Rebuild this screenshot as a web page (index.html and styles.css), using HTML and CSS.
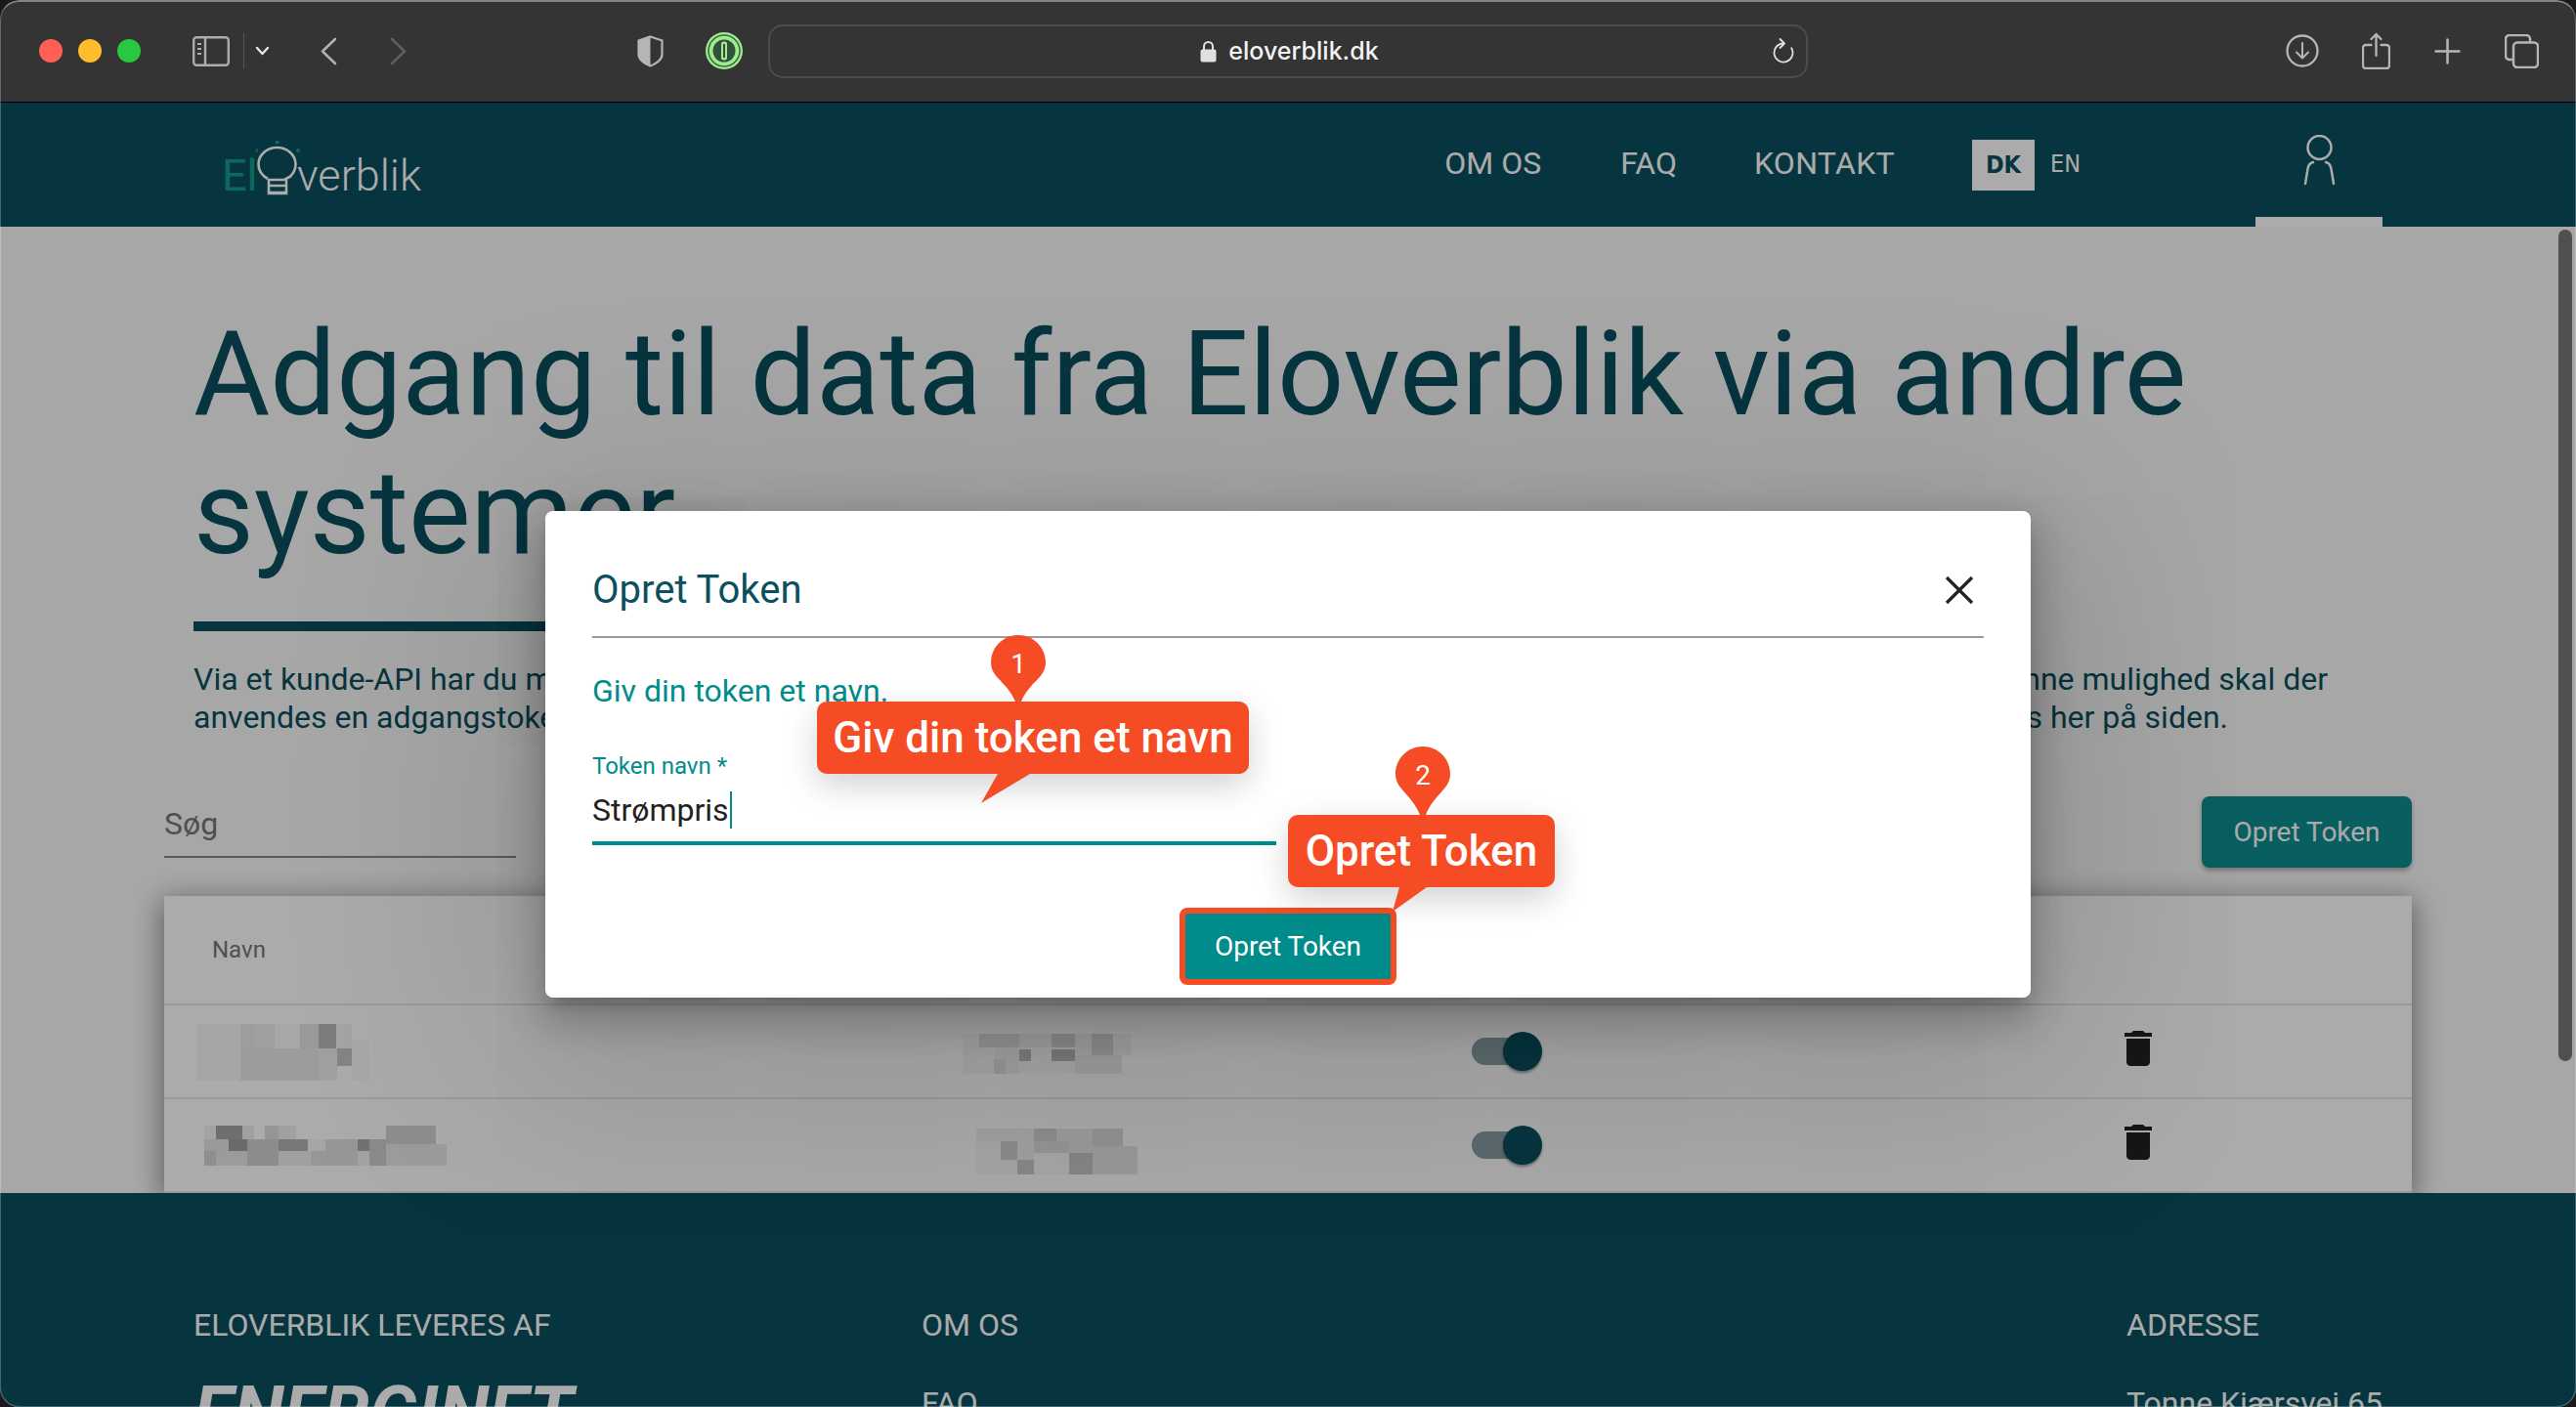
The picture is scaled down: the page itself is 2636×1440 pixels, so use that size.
FILE: index.html
```html
<!DOCTYPE html>
<html lang="da">
<head>
<meta charset="utf-8">
<title>Eloverblik</title>
<link rel="stylesheet" href="styles.css">
</head>
<body>
<div class="window">
  <div class="toolbar">
    <span class="light red"></span><span class="light yellow"></span><span class="light green"></span>
    <svg class="ic-sidebar" width="38" height="31" viewBox="0 0 38 31" fill="none" stroke="#adadad" stroke-width="2.4"><rect x="1.2" y="1.2" width="35.6" height="28.6" rx="3"/><path d="M13 1.2V29.8"/><path d="M5 8h4M5 13h4M5 18h4" stroke-width="2"/></svg>
    <span class="tb-divider"></span>
    <svg class="ic-chev" width="15" height="10" viewBox="0 0 15 10" fill="none" stroke="#e6e6e6" stroke-width="2.4" stroke-linecap="round" stroke-linejoin="round"><path d="M2 2l5.500 6L13 2"/></svg>
    <svg class="ic-back" width="17" height="29" viewBox="0 0 17 29" fill="none" stroke="#b0b0b0" stroke-width="2.600" stroke-linecap="round" stroke-linejoin="round"><path d="M15 2L2 14.500 15 27"/></svg>
    <svg class="ic-fwd" width="17" height="29" viewBox="0 0 17 29" fill="none" stroke="#5f5f5f" stroke-width="2.600" stroke-linecap="round" stroke-linejoin="round"><path d="M2 2l13 12.500L2 27"/></svg>
    <svg class="ic-shield" width="27" height="33" viewBox="0 0 27 33"><path d="M13.500 1.500L25.500 5.500V20C25.500 25 19 29.500 13.500 31.500 8 29.500 1.500 25 1.500 20V5.500Z" fill="none" stroke="#b5b5b5" stroke-width="2.200"/><path d="M13.500 1.500L1.500 5.500V20C1.500 25 8 29.500 13.500 31.500Z" fill="#b5b5b5"/></svg>
    <svg class="ic-onepass" width="38" height="38" viewBox="0 0 38 38"><circle cx="19" cy="19" r="19" fill="#a2ea90"/><circle cx="19" cy="19" r="16" fill="none" stroke="#2f6b35" stroke-width="1.500"/><circle cx="19" cy="19" r="11.500" fill="#33503a"/><rect x="16" y="9.500" width="6" height="19" rx="2.500" fill="#a2ea90"/><rect x="18" y="12" width="2" height="14" fill="#33503a"/></svg>
    <div class="urlbar">
      <span></span>
      <span class="url">
        <svg width="17" height="23" viewBox="0 0 17 23"><path d="M4 10V6.500a4.500 4.500 0 0 1 9 0V10" fill="none" stroke="#e0e0e0" stroke-width="2"/><rect x="0.500" y="9.500" width="16" height="13" rx="2" fill="#e0e0e0"/></svg>
        <span class="url-text">eloverblik.dk</span>
      </span>
      <svg class="ic-reload" width="22" height="26" viewBox="0 0 22 26" fill="none" stroke="#e0e0e0" stroke-width="1.800" stroke-linecap="round" stroke-linejoin="round"><path d="M11 5.500A9.500 9.500 0 1 0 19.200 10.200"/><path d="M7.500 1L12 5.500 7.500 10"/></svg>
    </div>
    <svg class="ic-download" width="34" height="34" viewBox="0 0 34 34" fill="none" stroke="#b5b5b5" stroke-width="2.300" stroke-linecap="round" stroke-linejoin="round"><circle cx="17" cy="17" r="15.500"/><path d="M17 9v15M11 18.500l6 6 6-6" stroke-width="2"/></svg>
    <svg class="ic-share" width="29" height="38" viewBox="0 0 29 38" fill="none" stroke="#b5b5b5" stroke-width="2.300" stroke-linecap="round" stroke-linejoin="round"><path d="M9.500 13H4a3 3 0 0 0-3 3v18a3 3 0 0 0 3 3h21a3 3 0 0 0 3-3V16a3 3 0 0 0-3-3h-5.500"/><path d="M14.500 24V2M9.500 7l5-5 5 5"/></svg>
    <svg class="ic-plus" width="27" height="27" viewBox="0 0 27 27" fill="none" stroke="#b5b5b5" stroke-width="2.500" stroke-linecap="round"><path d="M13.500 1.500v24M1.500 13.500h24"/></svg>
    <svg class="ic-tabs" width="35" height="35" viewBox="0 0 35 35" fill="none" stroke="#b5b5b5" stroke-width="2.500"><path d="M8 26H5a4 4 0 0 1-4-4V5a4 4 0 0 1 4-4h17a4 4 0 0 1 4 4v3"/><rect x="9" y="8.500" width="25" height="25.500" rx="4"/></svg>
  </div>

  <div class="page">
    <header class="site-header">
      <div class="logo">
        <span class="logo-el">El</span>
        <svg class="logo-bulb" width="55" height="58" viewBox="0 0 55 58" fill="none" stroke="#ffffff" stroke-width="2.600"><path d="M12 40C5 36 2.500 31 2.500 25a19 17 0 0 1 38 0c0 5-2 9-5 12"/><path d="M12 41h17l7-4M13 41v14h18V41M13 47h18M13 54h18"/><g fill="#179c8a" stroke="none"><circle cx="21.700" cy="2.500" r="2"/><circle cx="0" cy="11" r="2"/><circle cx="43" cy="11" r="2"/></g></svg>
        <span class="logo-rest">verblik</span>
      </div>
      <nav class="nav">
        <a class="nav-link">OM OS</a>
        <a class="nav-link nav-faq">FAQ</a>
        <a class="nav-link nav-kontakt">KONTAKT</a>
        <div class="lang"><span class="lang-on">DK</span><span class="lang-off">EN</span></div>
        <div class="user">
          <svg width="33" height="52" viewBox="0 0 33 52" fill="none" stroke="#fff" stroke-width="2.500" stroke-linecap="round"><circle cx="16.500" cy="13" r="12"/><path d="M10 28C6 29 5 31 4.500 35L2 50M23 28c4 1 5 3 5.500 7L31 50"/></svg>
        </div>
      </nav>
    </header>

    <main class="main">
      <h1 class="title">Adgang til data fra Eloverblik via andre systemer</h1>
      <div class="rule"></div>
      <div class="intro">
        <p class="intro-line first"><span>Via et kunde-API har du mulighed for at hente dine data</span><span>For at benytte denne mulighed skal der</span></p>
        <p class="intro-line second"><span>anvendes en adgangstoken</span><span>Det gøres her på siden.</span></p>
      </div>
      <div class="tools">
        <div class="search">Søg</div>
        <button class="btn-main">Opret Token</button>
      </div>
      <section class="card">
        <div class="row head"><span class="cell-name">Navn</span></div>
        <div class="row">
          <svg class="blob b1" width="176" height="58" viewBox="0 0 176 58">
            <rect width="45" height="58" fill="#f8f8f8"/><rect x="45" width="15" height="28" fill="#eaeaea"/><rect x="60" width="20" height="25" fill="#efefef"/><rect x="80" width="26" height="25" fill="#fafafa"/><rect x="106" width="19" height="25" fill="#e6e6e6"/><rect x="125" width="18" height="25" fill="#bdbdbd"/><rect x="143" width="16" height="25" fill="#f5f5f5"/><rect x="45" y="25" width="80" height="33" fill="#e9e9e9"/><rect x="125" y="25" width="19" height="33" fill="#efefef"/><rect x="144" y="25" width="15" height="18" fill="#c5c5c5"/><rect x="144" y="43" width="15" height="15" fill="#ffffff"/><rect x="159" y="16" width="17" height="42" fill="#fafafa"/>
          </svg>
          <svg class="blob b3" width="173" height="41" viewBox="0 0 173 41">
            <rect width="32" height="41" fill="#f6f6f6"/><rect x="17" width="41" height="14" fill="#dedede"/><rect x="58" width="33" height="14" fill="#efefef"/><rect x="91" width="24" height="14" fill="#d1d1d1"/><rect x="115" width="17" height="22" fill="#f0f0f0"/><rect x="132" width="22" height="22" fill="#d5d5d5"/><rect x="154" width="19" height="22" fill="#f4f4f4"/><rect x="32" y="14" width="26" height="12" fill="#f0f0f0"/><rect x="32" y="26" width="12" height="15" fill="#e0e0e0"/><rect x="44" y="26" width="14" height="15" fill="#f0f0f0"/><rect x="58" y="14" width="33" height="14" fill="#f8f8f8"/><rect x="58" y="16" width="12" height="12" fill="#bababa"/><rect x="91" y="14" width="24" height="14" fill="#f8f8f8"/><rect x="91" y="16" width="24" height="12" fill="#b8b8b8"/><rect x="115" y="22" width="48" height="19" fill="#ececec"/><rect x="58" y="28" width="57" height="13" fill="#f8f8f8"/>
          </svg>
          <span class="toggle"><span class="knob"></span></span>
          <svg class="trash" width="48" height="48" viewBox="0 0 24 24"><path d="M6 19c0 1.100.9 2 2 2h8c1.100 0 2-.9 2-2V7H6v12zM19 4h-3.500l-1-1h-5l-1 1H5v2h14V4z"/></svg>
        </div>
        <div class="row">
          <svg class="blob b2" width="248" height="41" viewBox="0 0 248 41">
            <rect width="12" height="14" fill="#f2f2f2"/><rect x="12" width="27" height="14" fill="#a6a6a6"/><rect x="39" width="12" height="14" fill="#efefef"/><rect x="62" width="14" height="14" fill="#dedede"/><rect x="76" width="18" height="14" fill="#efefef"/><rect x="186" width="51" height="19" fill="#d4d4d4"/><rect y="14" width="25" height="12" fill="#e4e4e4"/><rect x="25" y="14" width="19" height="12" fill="#9e9e9e"/><rect x="44" y="14" width="32" height="27" fill="#d1d1d1"/><rect x="76" y="14" width="30" height="12" fill="#b3b3b3"/><rect x="106" y="14" width="18" height="12" fill="#f6f6f6"/><rect x="124" y="14" width="33" height="27" fill="#e0e0e0"/><rect x="157" y="14" width="12" height="12" fill="#aaaaaa"/><rect x="169" y="14" width="17" height="27" fill="#cecece"/><rect x="186" y="19" width="62" height="22" fill="#e9e9e9"/><rect y="26" width="12" height="15" fill="#d5d5d5"/><rect x="12" y="26" width="32" height="15" fill="#e7e7e7"/><rect x="76" y="26" width="33" height="15" fill="#efefef"/><rect x="109" y="26" width="15" height="15" fill="#e1e1e1"/><rect x="157" y="26" width="12" height="15" fill="#f3f3f3"/>
          </svg>
          <svg class="blob b4" width="165" height="47" viewBox="0 0 165 47">
            <rect width="59" height="13" fill="#f0f0f0"/><rect x="59" width="23" height="13" fill="#d4d4d4"/><rect x="82" width="37" height="13" fill="#e9e9e9"/><rect x="119" width="31" height="18" fill="#dbdbdb"/><rect y="13" width="25" height="34" fill="#f8f8f8"/><rect x="25" y="13" width="17" height="19" fill="#d1d1d1"/><rect x="42" y="13" width="17" height="19" fill="#f0f0f0"/><rect x="59" y="13" width="36" height="12" fill="#e0e0e0"/><rect x="95" y="13" width="24" height="12" fill="#e7e7e7"/><rect x="119" y="18" width="46" height="29" fill="#e6e6e6"/><rect x="25" y="32" width="17" height="15" fill="#f8f8f8"/><rect x="42" y="32" width="17" height="15" fill="#cbcbcb"/><rect x="59" y="25" width="36" height="22" fill="#fafafa"/><rect x="95" y="25" width="24" height="22" fill="#c8c8c8"/>
          </svg>
          <span class="toggle"><span class="knob"></span></span>
          <svg class="trash" width="48" height="48" viewBox="0 0 24 24"><path d="M6 19c0 1.100.9 2 2 2h8c1.100 0 2-.9 2-2V7H6v12zM19 4h-3.500l-1-1h-5l-1 1H5v2h14V4z"/></svg>
        </div>
      </section>
    </main>

    <footer class="footer">
      <div>
        <h4 class="foot-head">ELOVERBLIK LEVERES AF</h4>
        <div class="brand">ENERGINET</div>
      </div>
      <div>
        <h4 class="foot-head">OM OS</h4>
        <div class="foot-item">FAQ</div>
      </div>
      <div>
        <h4 class="foot-head">ADRESSE</h4>
        <div class="foot-item">Tonne Kjærsvej 65</div>
      </div>
    </footer>
    <div class="overlay"></div>
    <div class="scrollthumb"></div>
  </div>

  <div class="modal">
    <div class="modal-head">
      <h2 class="modal-title">Opret Token</h2>
      <svg class="modal-close" width="30" height="30" viewBox="0 0 30 30" fill="none" stroke="#222" stroke-width="3.200"><path d="M2 2l26 26M28 2L2 28"/></svg>
    </div>
    <p class="modal-sub">Giv din token et navn.</p>
    <label class="field-label">Token navn *</label>
    <div class="field-value">Strømpris<span class="caret"></span></div>
    <div class="modal-actions"><button class="btn-modal">Opret Token</button></div>
  </div>

  <div class="callout c1">
    <svg class="pin" width="56" height="68" viewBox="0 0 56 68"><path d="M28 0C43.500 0 56 12.500 56 28 56 44 40 47 31 68H25C16 47 0 44 0 28 0 12.500 12.500 0 28 0Z"/></svg>
    <span class="pin-num">1</span>
    <svg class="tail" width="60" height="30" viewBox="0 0 60 30"><path d="M25 0H58L8 30Z"/></svg>
    Giv din token et navn
  </div>
  <div class="callout c2">
    <svg class="pin" width="56" height="70" viewBox="0 0 56 70"><path d="M28 0C43.500 0 56 12.500 56 28 56 44 40 48 31 70H25C16 48 0 44 0 28 0 12.500 12.500 0 28 0Z"/></svg>
    <span class="pin-num">2</span>
    <svg class="tail" width="45" height="25" viewBox="0 0 45 25"><path d="M14 0H42L7 25Z"/></svg>
    Opret Token
  </div>
</div>
</body>
</html>
```

FILE: styles.css
```css
* { box-sizing: border-box; }
html, body { margin: 0; padding: 0; height: 100%; background: #1a1a1a; overflow: hidden; }
body { font-family: Roboto, "Liberation Sans", sans-serif; }
.window { position: relative; width: 2636px; height: 1440px; border-radius: 20px; overflow: hidden; display: flex; flex-direction: column; }
.window::after { content: ""; position: absolute; inset: 0; border-radius: 20px; border: 1px solid rgba(255,255,255,.25); border-top: 2px solid rgba(255,255,255,.4); pointer-events: none; }

/* Browser toolbar */
.toolbar { flex: 0 0 105px; height: 105px; background: #343434; border-bottom: 1px solid #000; display: flex; align-items: center; padding-left: 40px; }
.light { width: 24px; height: 24px; border-radius: 50%; margin-right: 16px; }
.red { background: #ff5f57; }
.yellow { background: #febc2e; }
.green { background: #28c840; }
.ic-sidebar { margin-left: 37px; }
.tb-divider { width: 1px; height: 36px; background: #555; margin-left: 14px; }
.ic-chev { margin-left: 11px; }
.ic-back { margin-left: 52px; }
.ic-fwd { margin-left: 54px; }
.ic-shield { margin-left: 236px; }
.ic-onepass { margin-left: 43px; }
.urlbar { width: 1064px; height: 55px; margin-left: 26px; border: 2px solid #4c4c4c; border-radius: 15px; display: grid; grid-template-columns: 1fr auto 1fr; align-items: center; padding: 0 12px 0 15px; }
.url { display: flex; align-items: center; gap: 12px; }
.url-text { font-family: Inter, sans-serif; font-size: 25px; color: #f2f2f2; font-weight: 500; }
.ic-reload { justify-self: end; }
.ic-download { margin-left: 489px; }
.ic-share { margin-left: 44px; }
.ic-plus { margin-left: 45px; }
.ic-tabs { margin-left: 45px; }

/* Page */
.page { position: relative; flex: 1; overflow: hidden; background: #fafafa; }
.site-header { height: 127px; background: #0a505e; display: flex; align-items: stretch; padding: 0 198px 0 227px; justify-content: space-between; }
.logo { display: flex; align-items: flex-end; padding-bottom: 31px; font-size: 45px; font-weight: 300; line-height: 42px; }
.logo-el { color: #179c8a; font-weight: 400; width: 35px; }
.logo-bulb { margin-right: -13px; }
.logo-rest { color: #fff; }
.nav { display: flex; align-items: center; font-size: 32px; color: #fff; }
.nav-link { margin-right: 81px; line-height: 38px; padding-bottom: 4px; }
.nav-faq { margin-right: 79px; }
.nav-kontakt { letter-spacing: .3px; margin-right: 79px; }
.lang { display: flex; align-items: center; font-family: "DejaVu Sans Condensed", "DejaVu Sans", sans-serif; font-size: 25px; margin-right: 179px; }
.lang-on { width: 64px; height: 52px; background: #fff; color: #0a505e; font-weight: 700; display: flex; align-items: center; justify-content: center; margin-right: 16px; padding-bottom: 1px; }
.lang-off { color: #fff; padding-bottom: 2px; }
.user { width: 130px; height: 127px; border-bottom: 10px solid #fff; display: flex; justify-content: center; padding-top: 33px; }

.main { padding: 80px 168px 0; height: 989px; }
.title { margin: 0 0 40px 30px; font-size: 120px; line-height: 142px; font-weight: 400; color: #0a505e; width: 2100px; }
.rule { width: 600px; height: 10px; margin-left: 30px; background: #0a505e; }
.intro { margin: 30px 0 61px 30px; color: #0a505e; font-size: 32px; line-height: 39px; }
.intro-line { margin: 0; display: flex; justify-content: space-between; white-space: nowrap; }
.intro-line.first { padding-right: 86px; }
.intro-line.second { padding-right: 188px; }
.tools { height: 73px; margin-bottom: 29px; display: flex; justify-content: space-between; }
.search { width: 360px; height: 63px; border-bottom: 2px solid #8a8a8a; font-size: 32px; color: #777; line-height: 38px; padding-top: 9px; }
.btn-main { width: 215px; height: 73px; border: 0; border-radius: 8px; background: #0e8e8f; color: #fff; font: 400 28px Roboto, sans-serif; box-shadow: 0 3px 5px rgba(0,0,0,.3); }
.card { background: #fff; box-shadow: 0 6px 28px 2px rgba(0,0,0,.45); }
.row { height: 96px; display: grid; grid-template-columns: 817px 521px 658px 1fr; align-items: center; border-bottom: 2px solid #e6e6e6; }
.row.head { height: 112px; display: flex; }
.cell-name { margin-left: 49px; font-size: 24px; color: #777; }
.blob { display: block; }
.b1 { margin: 2px 0 0 33px; }
.b2 { margin-left: 41px; }
.b3 { margin-top: 5px; }
.b4 { margin: 13px 0 0 14px; }
.toggle { position: relative; display: block; width: 60px; height: 28px; border-radius: 14px; background: #8aa0a6; }
.knob { position: absolute; right: -12px; top: -6px; width: 40px; height: 40px; border-radius: 50%; background: #0a505e; box-shadow: 0 2px 3px rgba(0,0,0,.4); }
.trash { display: block; margin-top: -6px; fill: #212121; }

.footer { height: 300px; background: #0a505e; color: #fff; display: grid; grid-template-columns: 745px 1233px 1fr; padding: 116px 0 0 198px; font-size: 32px; line-height: 38px; }
.foot-head { margin: 0; font-size: 32px; font-weight: 400; line-height: 38px; }
.foot-item { margin-top: 42px; }
.brand { margin-top: 35px; font-size: 75px; line-height: 72px; font-weight: 700; font-style: italic; }

.overlay { position: absolute; inset: 0; background: rgba(0,0,0,.33); }
.scrollthumb { position: absolute; right: 4px; top: 130px; width: 14px; height: 851px; border-radius: 7px; background: #505050; }

/* Dialog */
.modal { position: absolute; left: 558px; top: 523px; width: 1520px; height: 498px; background: #fff; border-radius: 8px; padding: 0 48px; box-shadow: 0 11px 15px -7px rgba(0,0,0,.2), 0 24px 38px 3px rgba(0,0,0,.14), 0 9px 46px 8px rgba(0,0,0,.12), 0 40px 220px 50px rgba(0,0,0,.16); }
.modal-head { height: 130px; border-bottom: 2px solid #9a9a9a; display: flex; align-items: center; justify-content: space-between; padding: 0 10px 0 0; }
.modal-title { margin: 0; font-size: 40px; font-weight: 400; color: #0a505e; line-height: 46px; padding-top: 34px; }
.modal-close { margin-top: 34px; }
.modal-sub { margin: 35px 0 0; font-size: 32px; line-height: 38px; color: #008c8a; }
.field-label { display: block; margin-top: 44px; font-size: 24px; line-height: 28px; color: #008c8a; }
.field-value { margin-top: 12px; height: 55px; border-bottom: 4px solid #008c8a; width: 700px; font-size: 32px; line-height: 38px; color: #222; display: flex; }
.caret { width: 2px; height: 38px; background: #008c8a; margin-left: 1px; }
.modal-actions { display: flex; justify-content: center; margin-top: 64px; }
.btn-modal { width: 222px; height: 79px; border: 6px solid #f64c25; border-radius: 8px; background: #008c8a; color: #fff; font: 400 28px Roboto, sans-serif; }

/* Annotations */
.callout { position: absolute; height: 74px; background: #f64c25; border-radius: 10px; color: #fff; font-size: 44px; font-weight: 500; line-height: 74px; text-align: center; box-shadow: 0 12px 34px rgba(0,0,0,.18); white-space: nowrap; }
.c1 { left: 836px; top: 718px; width: 442px; }
.c2 { left: 1318px; top: 834px; width: 273px; }
.pin, .tail { position: absolute; fill: #f64c25; display: block; }
.c1 .pin { left: 178px; top: -68px; }
.c2 .pin { left: 110px; top: -70px; }
.tail { top: 100%; }
.c1 .tail { left: 160px; }
.c2 .tail { left: 100px; }
.pin-num { position: absolute; width: 56px; font-size: 28px; font-weight: 400; line-height: 60px; text-align: center; }
.c1 .pin-num { left: 178px; top: -68px; }
.c2 .pin-num { left: 110px; top: -70px; }
```
